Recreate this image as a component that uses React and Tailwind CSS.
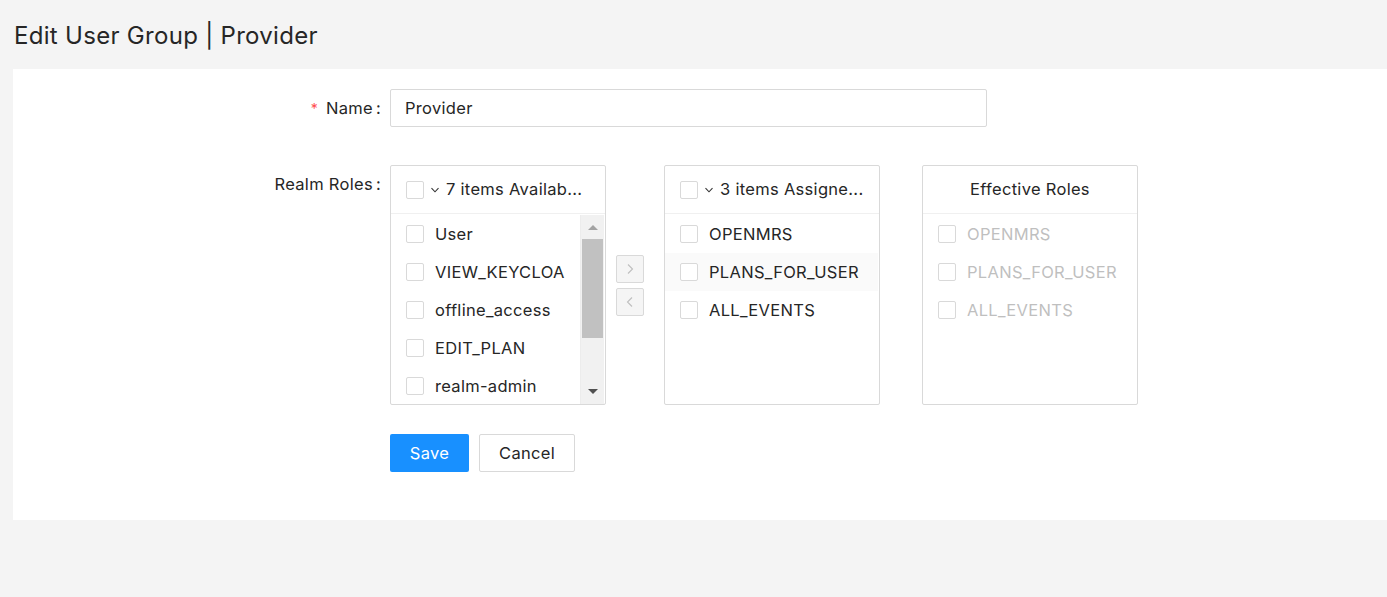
import React from 'react';

const font = { fontFamily: 'Inter, "Open Sans", sans-serif' };

function Box() {
    return <span className="inline-block w-[18px] h-[18px] shrink-0 border border-[#d9d9d9] rounded-[2px] bg-white" />;
}

function Chevron() {
    return (
        <svg width="10" height="10" viewBox="0 0 10 10" className="shrink-0">
            <path d="M1.5 3.2 L5 6.8 L8.5 3.2" fill="none" stroke="#333" strokeWidth="1.1" />
        </svg>
    );
}

function Row({ label, disabled, active }) {
    return (
        <div className={`flex items-center gap-[11px] h-[38px] pl-[15px] pr-[10px] ${active ? 'bg-[#fafafa]' : ''}`}>
            <Box />
            <span className={`text-[16.5px] tracking-[0.3px] whitespace-nowrap ${disabled ? 'text-[#bfbfbf]' : 'text-[#262626]'}`}>{label}</span>
        </div>
    );
}

function Scrollbar() {
    return (
        <div className="w-[24px] h-full flex flex-col items-center bg-[#f1f1f1] border-l border-[#ececec]">
            <div className="h-[24px] flex items-center justify-center">
                <svg width="10" height="6" viewBox="0 0 10 6"><path d="M0 6 L5 1 L10 6 Z" fill="#a3a3a3" /></svg>
            </div>
            <div className="w-[21px] h-[99px] bg-[#c1c1c1]" />
            <div className="flex-1" />
            <div className="h-[24px] flex items-center justify-center">
                <svg width="10" height="6" viewBox="0 0 10 6"><path d="M0 0 L10 0 L5 5 Z" fill="#505050" /></svg>
            </div>
        </div>
    );
}

function Panel({ title, plain, children, scroll }) {
    return (
        <div className="w-[216px] h-[240px] border border-[#d9d9d9] rounded-[2px] bg-white flex flex-col">
            <div className={`h-[48px] shrink-0 border-b border-[#f0f0f0] flex items-center ${plain ? 'justify-center' : 'pl-[15px] pr-[16px] gap-[6px]'}`}>
                {plain ? (
                    <span className="text-[16.5px] tracking-[0.3px] text-[#262626]">{title}</span>
                ) : (
                    <>
                        <Box />
                        <Chevron />
                        <span className="text-[16.5px] tracking-[0.3px] text-[#262626] whitespace-nowrap">{title}</span>
                    </>
                )}
            </div>
            <div className="flex-1 flex min-h-0 pt-[1px] pr-[1px]">
                <div className="flex-1 min-w-0">{children}</div>
                {scroll && <Scrollbar />}
            </div>
        </div>
    );
}

function ArrowBtn({ dir }) {
    return (
        <div className="w-[28px] h-[28px] border border-[#d9d9d9] rounded-[2px] bg-[#f5f5f5] flex items-center justify-center">
            <svg width="10" height="12" viewBox="0 0 10 12">
                {dir === 'right'
                    ? <path d="M3 1.5 L7.5 6 L3 10.5" fill="none" stroke="#bfbfbf" strokeWidth="1.1" />
                    : <path d="M7 1.5 L2.5 6 L7 10.5" fill="none" stroke="#bfbfbf" strokeWidth="1.1" />}
            </svg>
        </div>
    );
}

export default function App() {
    return (
        <div className="w-[1387px] h-[597px] bg-[#f4f4f4] overflow-hidden" style={font}>
            <h1 className="pl-[14px] pt-[20px] h-[69px] text-[24px] leading-[32px] tracking-[0.3px] text-[#262626]">Edit User Group | Provider</h1>
            <div className="ml-[13px] bg-white h-[451px] pt-[20px]">
                {/* Name */}
                <div className="flex items-center h-[38px]">
                    <label className="w-[377px] pr-[9px] flex justify-end items-center text-[16.5px] tracking-[0.3px] text-[#262626]">
                        <span className="text-[#ff4d4f] mr-[8px] text-[14px]">*</span>Name<span className="ml-[3px]">:</span>
                    </label>
                    <div className="w-[597px] h-[38px] border border-[#d9d9d9] rounded-[2px] flex items-center px-[14px] text-[16.5px] tracking-[0.3px] text-[#262626]">
                        Provider
                    </div>
                </div>

                {/* Realm roles */}
                <div className="flex mt-[38px]">
                    <label className="w-[377px] pr-[9px] pt-[7px] flex justify-end text-[16.5px] tracking-[0.3px] text-[#262626]">
                        Realm Roles<span className="ml-[3px]">:</span>
                    </label>
                    <div className="flex">
                        <Panel title="7 items Availab..." scroll>
                            <Row label="User" />
                            <Row label="VIEW_KEYCLOA" />
                            <Row label="offline_access" />
                            <Row label="EDIT_PLAN" />
                            <Row label="realm-admin" />
                        </Panel>
                        <div className="w-[58px] flex flex-col items-start justify-center gap-[5px] pl-[10px] pt-[1px]">
                            <ArrowBtn dir="right" />
                            <ArrowBtn dir="left" />
                        </div>
                        <Panel title="3 items Assigne...">
                            <Row label="OPENMRS" />
                            <Row label="PLANS_FOR_USER" active />
                            <Row label="ALL_EVENTS" />
                        </Panel>
                        <div className="w-[42px]" />
                        <Panel title="Effective Roles" plain>
                            <Row label="OPENMRS" disabled />
                            <Row label="PLANS_FOR_USER" disabled />
                            <Row label="ALL_EVENTS" disabled />
                        </Panel>
                    </div>
                </div>

                {/* Actions */}
                <div className="flex gap-[10px] ml-[377px] mt-[29px]">
                    <button className="h-[38px] w-[79px] rounded-[2px] bg-[#1890ff] text-white text-[16.5px] tracking-[0.3px]">Save</button>
                    <button className="h-[38px] w-[96px] rounded-[2px] border border-[#d9d9d9] bg-white text-[#262626] text-[16.5px] tracking-[0.3px]">Cancel</button>
                </div>
            </div>
        </div>
    );
}
